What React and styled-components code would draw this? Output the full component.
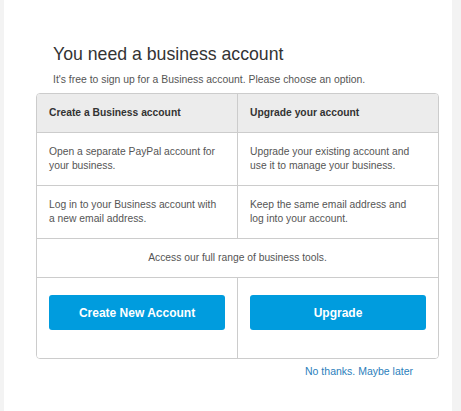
import React from "react";
import styled, { createGlobalStyle } from "styled-components";

const Global = createGlobalStyle`
  html, body { margin: 0; padding: 0; background: #f3f3f3; }
  body { font-family: "Liberation Sans", Arial, sans-serif; }
`;

const Panel = styled.div`
  margin-left: 4px;
  width: 448px;
  height: 411px;
  background: #fff;
  box-sizing: border-box;
  padding: 43px 0 0 32px;
`;

const Title = styled.h1`
  margin: 0 0 0 17px;
  font-size: 17.7px;
  font-weight: normal;
  line-height: 22px;
  color: #333;
`;

const Sub = styled.p`
  margin: 8px 0 0 17px;
  font-size: 10.4px;
  line-height: 14px;
  color: #555;
`;

const Table = styled.div`
  margin-top: 6px;
  width: 403px;
  box-sizing: border-box;
  border: 1px solid #ccc;
  border-radius: 4px;
  overflow: hidden;
  display: grid;
  grid-template-columns: 201px 1fr;
`;

const Cell = styled.div`
  padding: ${(p) => (p.$pad ? p.$pad : "12px 17px 12px 12px")};
  font-size: 10.3px;
  line-height: 14px;
  color: ${(p) => (p.$head ? "#333" : "#555")};
  font-weight: ${(p) => (p.$head ? "bold" : "normal")};
  background: ${(p) => (p.$head ? "#ececec" : "#fff")};
  border-right: ${(p) => (p.$left ? "1px solid #ccc" : "none")};
  border-bottom: ${(p) => (p.$last ? "none" : "1px solid #ccc")};
  grid-column: ${(p) => (p.$full ? "1 / -1" : "auto")};
  text-align: ${(p) => (p.$full ? "center" : "left")};
`;

const Button = styled.button`
  display: block;
  width: 100%;
  height: 35px;
  border: none;
  border-radius: 3px;
  background: #009cde;
  color: #fff;
  font-family: "Liberation Sans", Arial, sans-serif;
  font-weight: bold;
  font-size: 12px;
  cursor: pointer;
`;

const Footer = styled.div`
  width: 403px;
  display: flex;
  justify-content: flex-end;
  padding-right: 26px;
  box-sizing: border-box;
  margin-top: 5px;
`;

const Link = styled.a`
  font-size: 10.5px;
  line-height: 14px;
  color: #2b80bc;
  text-decoration: none;
`;

export default function App() {
  return (
    <>
      <Global />
      <Panel>
        <Title>You need a business account</Title>
        <Sub>It's free to sign up for a Business account. Please choose an option.</Sub>
        <Table>
          <Cell $head $left>Create a Business account</Cell>
          <Cell $head>Upgrade your account</Cell>
          <Cell $left>Open a separate PayPal account for your business.</Cell>
          <Cell>Upgrade your existing account and use it to manage your business.</Cell>
          <Cell $left>Log in to your Business account with a new email address.</Cell>
          <Cell>Keep the same email address and log into your account.</Cell>
          <Cell $full $pad="12px">Access our full range of business tools.</Cell>
          <Cell $left $last $pad="17px 12px 28px">
            <Button>Create New Account</Button>
          </Cell>
          <Cell $last $pad="17px 12px 28px">
            <Button>Upgrade</Button>
          </Cell>
        </Table>
        <Footer>
          <Link href="#">No thanks. Maybe later</Link>
        </Footer>
      </Panel>
    </>
  );
}
